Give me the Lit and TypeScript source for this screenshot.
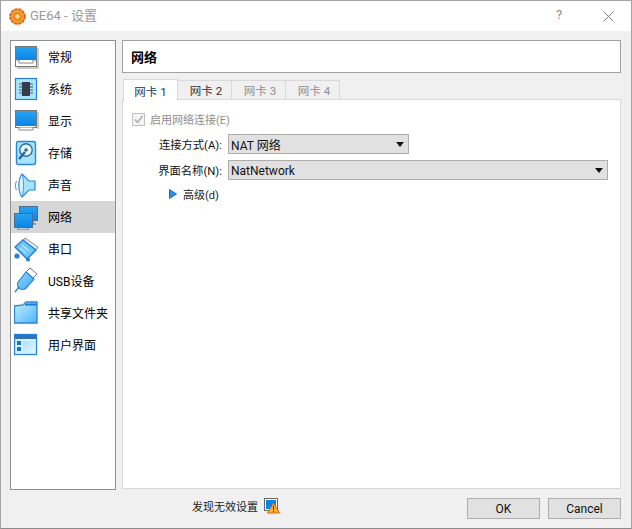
import { LitElement, html, css, svg } from "lit";
import { customElement } from "lit/decorators.js";

const B = "#0a84e8";
const icons: Record<string, unknown> = {
  general: svg`<rect x="1.500" y="2.500" width="21" height="20" fill="#fff" stroke="#777" /><rect x="2" y="3" width="20" height="13" fill="url(#g)"/><path d="M2 16h3v3h14v-3h3" fill="none" stroke="#888"/><path d="M24 4v20H3" fill="none" stroke="#bbb" stroke-width="1.500"/>`,
  system: svg`<rect x="1.500" y="2.500" width="21" height="21" fill="#a8e6fc" stroke="#2a7fdc" stroke-width="1.200"/><rect x="8" y="6" width="8" height="14" fill="#333c48"/><path d="M5 8h3M5 11h3M5 14h3M5 17h3M16 8h3M16 11h3M16 14h3M16 17h3" stroke="#4a5564"/>`,
  display: svg`<rect x="1.500" y="2.500" width="21" height="17" fill="#fff" stroke="#777"/><rect x="2" y="3" width="20" height="15" fill="url(#g)"/><path d="M5 19.500v2.500h14v-2.500" fill="#fff" stroke="#888"/><path d="M24 4v17" stroke="#bbb" stroke-width="1.500"/>`,
  storage: svg`<rect x="2.500" y="1.500" width="19" height="23" rx="2" fill="#a6e4fb" stroke="#2a84de" stroke-width="1.400"/><circle cx="12" cy="10" r="6.200" fill="#e8f9ff" stroke="#2b6c9c" stroke-width="1.400"/><circle cx="12" cy="10" r="1.800" fill="#2b6c9c"/><path d="M11 12 5 19" stroke="#2b6c9c" stroke-width="2.600"/>`,
  audio: svg`<path d="M8 2 15 9h6v9h-6L8 25C4 20 4 7 8 2z" fill="#a6e4fb" stroke="#2a84de" stroke-width="1.200"/><path d="M8 2C4 7 4 20 8 25c2-5 2-18 0-23z" fill="#d6f5ff" stroke="#2a84de" stroke-width=".8"/><path d="M2.500 9c-1.500 3-1.500 6 0 9" fill="none" stroke="#3a8fe0"/>`,
  network: svg`<rect x="5.500" y="2.500" width="18" height="14" fill="url(#g)" stroke="#4a6f93"/><path d="M4 23v3h10v-3z" fill="#c8d0d6" stroke="#6a7f93"/><rect x=".5" y="9.500" width="18" height="14" fill="url(#g)" stroke="#4a6f93"/><path d="M19 17v3h3" fill="none" stroke="#4a6f93"/>`,
  serial: svg`<path d="M11 2 24 11l-2 3L9 5z" fill="#eee" stroke="#888"/><path d="M9 4 22 14 13 23 1 11z" fill="#6cc6f8" stroke="#2a7fdc" stroke-width="1.500"/><path d="M8 9l7 6M6 12l6 5" stroke="#b8e8ff" stroke-width="1.400"/><circle cx="3" cy="20" r="2.600" fill="#2a7fdc"/><circle cx="14" cy="23.500" r="2" fill="#2a7fdc"/>`,
  usb: svg`<path d="M16 0 23 6l-4 4-7-6z" fill="#fff" stroke="#777"/><path d="M12 4 20 11 12 20c-2 2-5 2-7 0-2-2-2-5 0-7z" fill="url(#g4)" stroke="#2a84de" stroke-width="1.200"/><path d="M5 19 1 24" stroke="#2a84de" stroke-width="1.400"/>`,
  shared: svg`<path d="M.5 6 9 5l3-3h11v21H.5z" fill="url(#g2)" stroke="#2a84de" stroke-width="1.300"/><path d="M11 4.500h12" stroke="#0f7ce0" stroke-width="2"/>`,
  ui: svg`<rect x=".5" y="2.500" width="22" height="20" fill="#d5f3ff" stroke="#2a84de" stroke-width="1.300"/><rect x="1" y="3" width="21" height="4" fill="#3072b8"/><path d="M3 9h4v4H3zM3 15h4v4H3z" fill="#1d72d4"/><rect x="9" y="9" width="12" height="12" fill="url(#g3)"/>`,
};

const items: [string, string][] = [
  ["general", "常规"], ["system", "系统"], ["display", "显示"], ["storage", "存储"], ["audio", "声音"],
  ["network", "网络"], ["serial", "串口"], ["usb", "USB设备"], ["shared", "共享文件夹"], ["ui", "用户界面"],
];

const defs = svg`<defs>
  <linearGradient id="g" x1="0" y1="0" x2="0" y2="1"><stop offset="0" stop-color="#29a3f0"/><stop offset="1" stop-color="${B}"/></linearGradient>
  <linearGradient id="g2" x1="0" y1="0" x2="1" y2="1"><stop offset="0" stop-color="#c6f0fe"/><stop offset="1" stop-color="#4cb4f6"/></linearGradient>
  <linearGradient id="g3" x1="0" y1="0" x2="1" y2="1"><stop offset="0" stop-color="#a8e4fb"/><stop offset="1" stop-color="#e4f8ff"/></linearGradient>
  <linearGradient id="g4" x1="0" y1="0" x2="1" y2="1"><stop offset="0" stop-color="#8edafc"/><stop offset="1" stop-color="#3aa8f2"/></linearGradient>
</defs>`;

@customElement("app-root")
export class AppRoot extends LitElement {
  static styles = css`
    :host { display: block; width: 632px; height: 529px; overflow: hidden;
      font: 12px Roboto, "Noto Sans CJK SC", sans-serif; color: #000; }
    * { box-sizing: border-box; }
    .win { height: 529px; display: flex; flex-direction: column; background: #f0f0f0;
      border: 1px solid #a4a4a4; border-bottom-color: #8a8a8a; }
    .title { height: 30px; flex: none; background: #fff; display: flex; align-items: center; padding-left: 8px; gap: 4px; color: #999; font-size: 13px; }
    .title .name { margin-top: -3px; }
    .title .grow { flex: 1; }
    .help { width: 46px; padding-left: 2px; text-align: center; color: #8a8a8a; font-size: 13px; margin-top: -3px; }
    .close { width: 46px; height: 30px; display: flex; align-items: center; justify-content: center; }
    .main { flex: 1; display: grid; grid-template-columns: 106px 499px; column-gap: 6px; padding: 9px 0 0 9px; align-content: start; }
    .side { height: 450px; background: #fff; border: 1px solid #8f8f8f; }
    .item { height: 32px; display: flex; align-items: center; padding-left: 3px; gap: 8px; }
    .item svg { flex: none; }
    .item span { margin-top: -2px; }
    .item.sel { background: #d6d6d6; }
    .right { display: flex; flex-direction: column; height: 449px; }
    .head { height: 33px; flex: none; background: #fff; border: 1px solid #a2a2a2; display: flex; align-items: center; padding-left: 8px; font-weight: 700; font-size: 13px; }
    .tabs { display: flex; height: 21px; margin-top: 6px; padding-left: 1px; position: relative; z-index: 1; flex: none; }
    .tab { width: 54px; height: 20px; margin-top: 1px; padding-left: 3px; background: #f0f0f0; border: 1px solid #d9d9d9; border-left: 0; display: flex; align-items: center; justify-content: center; font-size: 11.500px; color: #333; }
    .tab.on { background: #fff; height: 22px; margin-top: 0; padding-left: 0; border-left: 1px solid #d9d9d9; border-bottom: 0; width: 55px; color: #0a3a60; }
    .tab.off { color: #8f8f8f; }
    .panel { flex: 1; background: #fff; border: 1px solid #d9d9d9; margin-top: -1px; padding: 9px 0 0 9px; }
    .check { display: flex; align-items: center; gap: 5px; height: 20px; color: #8e8e8e; font-size: 11px; }
    .box { width: 13px; height: 13px; border: 1px solid #c0c0c0; background: #f4f4f4; display: flex; }
    .form { display: grid; grid-template-columns: 96px 380px; row-gap: 6px; margin-top: 5px; align-items: center; }
    .label { text-align: right; padding-right: 6px; color: #111; font-size: 11.300px; }
    .select { height: 20px; background: #e1e1e1; border: 1px solid #adadad; display: flex; align-items: center; padding: 0 4px 0 2px; justify-content: space-between; color: #111; }
    .select.short { width: 181px; }
    .select .txt { margin-top: 1px; }
    .arrow { width: 0; height: 0; border: 4px solid transparent; border-top: 5px solid #111; border-bottom: 0; }
    .adv { display: flex; align-items: center; gap: 6px; margin: 6px 0 0 37px; color: #222; font-size: 11px; }
    .foot { height: 39px; flex: none; display: flex; align-items: center; padding: 0 10px 2px 0; }
    .warn { display: flex; align-items: center; gap: 6px; margin-left: 191px; padding-bottom: 5px; font-size: 11px; color: #222; }
    .btns { margin-left: auto; display: flex; gap: 8px; }
    .btn { width: 73px; height: 21px; background: #e1e1e1; border: 1px solid #adadad; display: flex; align-items: center; justify-content: center; color: #111; }
  `;

  render() {
    return html`<div class="win">
      <div class="title">
        <svg width="17" height="17" viewBox="0 0 17 17"><circle cx="8.500" cy="8.500" r="7.500" fill="#f09a2c" stroke="#d8541c" stroke-width="1.500" stroke-dasharray="3 1"/><circle cx="8.500" cy="8.500" r="3" fill="#fbd878" stroke="#c9681c"/></svg>
        <span class="name">GE64 - 设置</span><span class="grow"></span>
        <span class="help">?</span>
        <span class="close"><svg width="11" height="11" viewBox="0 0 11 11"><path d="M.500.500l10 10M10.500.500l-10 10" stroke="#808080" fill="none"/></svg></span>
      </div>
      <div class="main">
        <div class="side">
          ${items.map(([k, t]) => html`<div class="item ${k === "network" ? "sel" : ""}">
            <svg width="26" height="26" viewBox="0 0 26 26">${defs}${icons[k]}</svg><span>${t}</span></div>`)}
        </div>
        <div class="right">
          <div class="head">网络</div>
          <div class="tabs">
            <div class="tab on">网卡 1</div><div class="tab">网卡 2</div>
            <div class="tab off">网卡 3</div><div class="tab off">网卡 4</div>
          </div>
          <div class="panel">
            <div class="check"><span class="box"><svg width="11" height="11" viewBox="0 0 11 11"><path d="M2 5.500l2.500 3L9.500 2" fill="none" stroke="#a8a8a8" stroke-width="1.300"/></svg></span>启用网络连接(E)</div>
            <div class="form">
              <div class="label">连接方式(A):</div>
              <div class="select short"><span>NAT 网络</span><span class="arrow"></span></div>
              <div class="label">界面名称(N):</div>
              <div class="select"><span class="txt">NatNetwork</span><span class="arrow"></span></div>
            </div>
            <div class="adv"><svg width="8" height="10" viewBox="0 0 8 10"><path d="M.500.500 7.500 5 .500 9.500z" fill="#2a8fe0" stroke="#1a6fc0"/></svg>高级(d)</div>
          </div>
        </div>
      </div>
      <div class="foot">
        <div class="warn">发现无效设置
          <svg width="17" height="16" viewBox="0 0 17 16"><rect x=".5" y=".5" width="13" height="12" fill="#fff" stroke="#666"/><rect x="2" y="2" width="10" height="9" fill="${B}"/><path d="M9.500 5 15.500 15H3.500z" fill="#fbb030" stroke="#d8641a"/><path d="M9.500 8v4M9.500 13v1" stroke="#4a2a00"/></svg>
        </div>
        <div class="btns"><div class="btn">OK</div><div class="btn">Cancel</div></div>
      </div>
    </div>`;
  }
}
